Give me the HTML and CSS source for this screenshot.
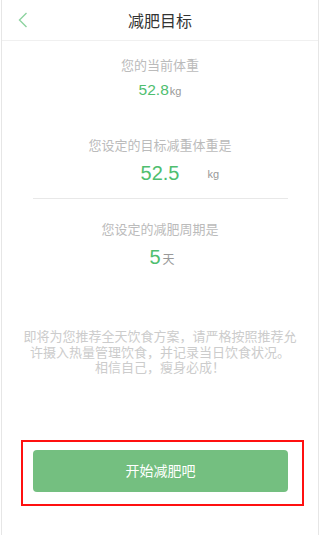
FILE: index.html
```html
<!DOCTYPE html>
<html>
	<head>
		<meta charset="UTF-8">
		<title>减肥目标</title>
		<link rel="stylesheet" href="styles.css">
	</head>
	<body>
		<div class="page">
			<div class="header">
				<div class="back">
					<svg width="10" height="16" viewBox="0 0 10 16">
						<polyline points="8.5,1 1.5,8 8.5,15" fill="none" stroke="#8ed3a0" stroke-width="1.4"/>
					</svg>
				</div>
				<div class="title">减肥目标</div>
				<div></div>
			</div>
			<div class="current">
				<p class="label">您的当前体重</p>
				<p class="value"><span class="num">52.8</span><span class="unit">kg</span></p>
			</div>
			<div class="target">
				<p class="label">您设定的目标减重体重是</p>
				<div class="value">
					<span></span>
					<span class="num">52.5</span>
					<span class="unit">kg</span>
				</div>
			</div>
			<div class="line"></div>
			<div class="period">
				<p class="label">您设定的减肥周期是</p>
				<p class="value"><span class="num">5</span><span class="unit">天</span></p>
			</div>
			<p class="tips">即将为您推荐全天饮食方案，请严格按照推荐允许摄入热量管理饮食，并记录当日饮食状况。<br>相信自己，瘦身必成！</p>
			<div class="mark">
				<div class="btn">开始减肥吧</div>
			</div>
		</div>
	</body>
</html>
```
FILE: styles.css
```css
*{
	padding: 0;
	margin: 0;
	list-style: none;
}
body{
	font-family: "Liberation Sans", "Noto Sans CJK SC", sans-serif;
	background: #fff;
}
.page{
	width: 316px;
	height: 535px;
	margin-left: 1px;
	border-left: 1px solid #e6e6e6;
	border-right: 1px solid #e6e6e6;
	overflow: hidden;
}
.header{
	height: 40px;
	border-bottom: 1px solid #f0f0f0;
	display: grid;
	grid-template-columns: 60px 1fr 60px;
	align-items: center;
}
.back{
	padding-left: 16px;
	height: 16px;
}
.back svg{
	display: block;
}
.title{
	text-align: center;
	font-size: 16px;
	color: #333;
}
.label{
	text-align: center;
	font-size: 13px;
	line-height: 18px;
	color: #bbb;
}
.num{
	color: #4fbe6f;
}
.unit{
	color: #999;
}
.current{
	margin-top: 16px;
}
.current .value{
	margin-top: 4px;
	text-align: center;
	line-height: 22px;
}
.current .num{
	font-size: 15.5px;
}
.current .unit{
	font-size: 11px;
	margin-left: 1px;
}
.target{
	margin-top: 35px;
}
.target .value{
	margin-top: 4px;
	display: grid;
	grid-template-columns: 1fr auto 1fr;
	align-items: center;
	height: 28px;
}
.target .num{
	font-size: 20px;
}
.target .unit{
	font-size: 11px;
	padding-left: 28px;
	padding-top: 2px;
}
.line{
	height: 1px;
	background: #e8e8e8;
	margin: 11px 30px 0 31px;
}
.period{
	margin-top: 22px;
}
.period .value{
	margin-top: 5px;
	text-align: center;
	line-height: 26px;
	padding-left: 4px;
}
.period .num{
	font-size: 20px;
}
.period .unit{
	font-size: 12px;
	margin-left: 2px;
}
.tips{
	margin-top: 56px;
	padding: 0 19px;
	text-align: center;
	font-size: 13px;
	line-height: 15.5px;
	color: #ccc;
}
.mark{
	width: 283px;
	box-sizing: border-box;
	margin: 64px 0 0 19px;
	border: 2px solid #ff1010;
	padding: 8px 14px 12px 10px;
}
.btn{
	height: 42px;
	line-height: 42px;
	border-radius: 4px;
	background: #74bf80;
	color: #fff;
	text-align: center;
	font-size: 14px;
}
```
